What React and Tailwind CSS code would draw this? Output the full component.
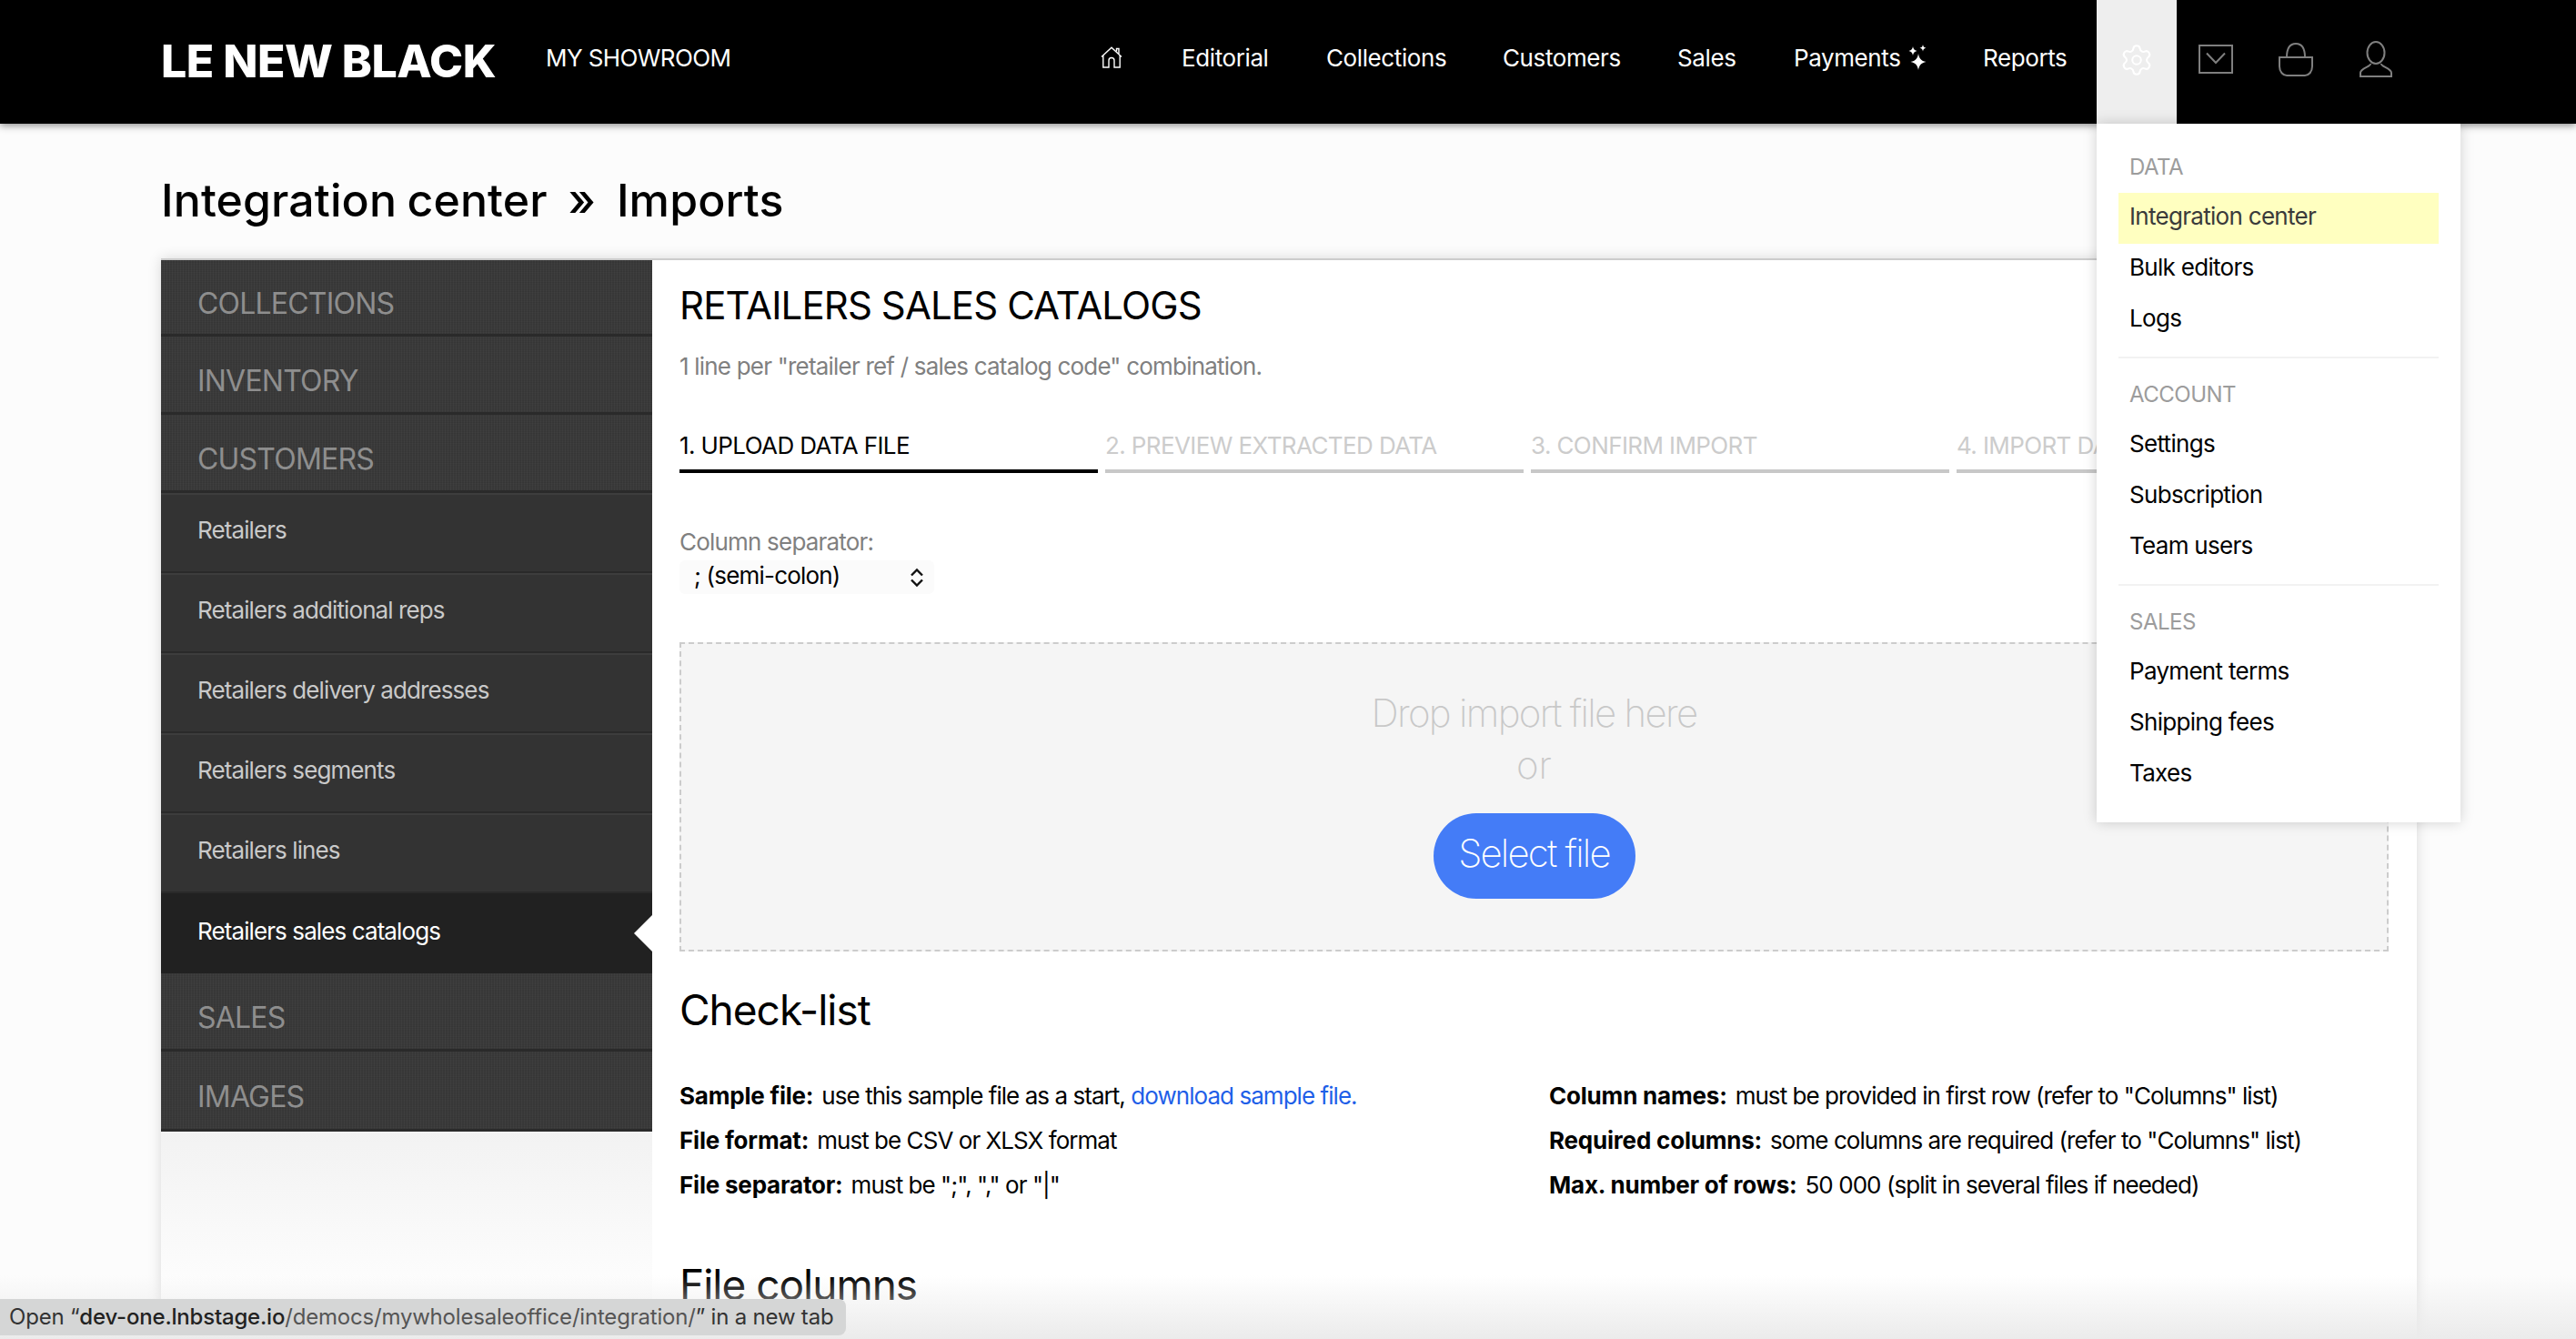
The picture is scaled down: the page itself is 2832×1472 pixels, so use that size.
import { Settings } from "lucide-react";

const font = "font-['Inter','Liberation_Sans',sans-serif]";

// fine woven noise of the sidebar headings
const sidebarTexture =
  "bg-[#3a3a3a] bg-[repeating-linear-gradient(0deg,rgba(0,0,0,0.07)_0px,rgba(0,0,0,0.07)_1px,transparent_1px,transparent_2px),repeating-linear-gradient(90deg,rgba(255,255,255,0.03)_0px,rgba(255,255,255,0.03)_1px,transparent_1px,transparent_3px)]";

function HomeIcon() {
  return (
    <svg width="24" height="24" viewBox="0 0 24 24" fill="none" stroke="#ffffff" strokeWidth="1.400" className="ml-[2px] mr-[65px] -mt-[10px]">
      <path d="M1 11.500 12 1.200l11 10.300" />
      <path d="M2.800 10v13H9v-7.500a3 3 0 0 1 6 0V23h6.200V10" />
      <path d="M17.500 5.500V2.500h2.500v5.500" />
    </svg>
  );
}

function MailIcon() {
  return (
    <svg width="38" height="32" viewBox="0 0 38 32" fill="none" stroke="#7f7f7f" strokeWidth="2">
      <rect x="1" y="1" width="36" height="30" />
      <path d="M9 9.500 19 20 29 9.500" />
    </svg>
  );
}

function BagIcon() {
  return (
    <svg width="38" height="38" viewBox="0 0 38 38" fill="none" stroke="#7f7f7f" strokeWidth="2">
      <path d="M1 17h36v10c0 6-4 10-8 10H9c-4 0-8-4-8-10z" />
      <path d="M9 17c0-10 4-15 10-15s10 5 10 15" />
    </svg>
  );
}

function UserIcon() {
  return (
    <svg width="38" height="40" viewBox="0 0 38 40" fill="none" stroke="#7f7f7f" strokeWidth="2">
      <ellipse cx="19" cy="13" rx="9.500" ry="12" />
      <path d="M13 25c1 3-11 5-11 10v4h34v-4c0-5-12-7-11-10" />
    </svg>
  );
}

function Sparkles() {
  return (
    <svg width="22" height="28" viewBox="0 0 22 28" fill="#ffffff" className="ml-[8px] -mt-[1px]">
      <path d="M11 10c.8 5 3 8 8.500 9-5.500 1-7.700 4-8.500 9-.8-5-3-8-8.500-9 5.500-1 7.700-4 8.500-9z" />
      <path d="M5 2c.4 2.800 1.500 4.300 4.500 5C6.500 7.700 5.400 9.200 5 12c-.4-2.800-1.500-4.300-4.500-5C3.500 6.300 4.600 4.800 5 2z" />
      <path d="M16 0c.3 2 1.100 3.200 3.500 3.700C17.100 4.200 16.300 5.400 16 7.500c-.3-2.100-1.100-3.300-3.500-3.800C14.900 3.200 15.700 2 16 0z" />
    </svg>
  );
}

function Header() {
  return (
    <header className="h-[136px] bg-black flex items-center pl-[177px] relative z-10 shadow-[0_2px_8px_rgba(0,0,0,0.45)]">
      <div className="text-white text-[50px] font-extrabold tracking-[-0.5px] leading-none w-[423px] whitespace-nowrap -mt-[3px]">
        LE NEW BLACK
      </div>
      <div className="text-white text-[26px] w-[608px] whitespace-nowrap -mt-[10px] tracking-[-0.6px]">MY SHOWROOM</div>
      <HomeIcon />
      <nav className="flex items-center text-white text-[26px] tracking-[-0.4px] -mt-[10px]">
        <span className="w-[159px]">Editorial</span>
        <span className="w-[194px]">Collections</span>
        <span className="w-[192px]">Customers</span>
        <span className="w-[128px]">Sales</span>
        <span className="w-[208px] flex items-center">
          Payments
          <Sparkles />
        </span>
        <span className="w-[125px]">Reports</span>
      </nav>
      <div className="w-[88px] h-[136px] bg-[#eeeeee] flex items-center justify-center pb-[4px]">
        <Settings size={38} strokeWidth={1.3} className="text-white" />
      </div>
      <div className="flex items-center gap-[50px] ml-[24px] -mt-[6px]">
        <MailIcon />
        <BagIcon />
        <UserIcon />
      </div>
    </header>
  );
}

function SectionRow({ label, height = "h-[86px]" }) {
  return (
    <div className={`${height} border-b-[3px] border-[#2a2a2a] flex items-center pl-[40px] pt-[14px] text-[#8e8e8e] text-[32px] tracking-[-0.8px] ${sidebarTexture}`}>
      {label}
    </div>
  );
}

function SubRow({ label, active }) {
  return (
    <div
      className={`h-[88px] flex items-center pl-[40px] pb-[6px] text-[26px] tracking-[-0.9px] relative ${
        active
          ? "bg-[#212121] text-white"
          : "bg-[#333333] text-[#c9c9c9] border-b-[2px] border-[#2a2a2a] shadow-[inset_0_2px_0_#3d3d3d]"
      }`}
    >
      {label}
      {active && (
        <span className="absolute right-0 top-[24px] border-y-[20px] border-y-transparent border-r-[20px] border-r-white" />
      )}
    </div>
  );
}

function Sidebar() {
  return (
    <aside className="w-[540px] shrink-0 flex flex-col">
      <SectionRow label="COLLECTIONS" height="h-[84px]" />
      <SectionRow label="INVENTORY" />
      <SectionRow label="CUSTOMERS" />
      <SubRow label="Retailers" />
      <SubRow label="Retailers additional reps" />
      <SubRow label="Retailers delivery addresses" />
      <SubRow label="Retailers segments" />
      <SubRow label="Retailers lines" />
      <SubRow label="Retailers sales catalogs" active />
      <SectionRow label="SALES" />
      <SectionRow label="IMAGES" height="h-[88px]" />
      <div className="flex-1 bg-[linear-gradient(#f2f2f2,#fdfdfd_170px)]" />
    </aside>
  );
}

function Step({ label, active }) {
  return (
    <div
      className={`w-[460px] shrink-0 h-[48px] border-b-4 text-[26px] leading-[35px] tracking-[-0.6px] whitespace-nowrap overflow-hidden ${
        active ? "border-black text-black" : "border-[#c8c8c8] text-[#cccccc]"
      }`}
    >
      {label}
    </div>
  );
}

function Fact({ label, children }) {
  return (
    <div className="h-[49px] text-[26px] tracking-[-0.95px] whitespace-nowrap text-black">
      <b className="font-bold mr-[9px] tracking-[-0.2px]">{label}</b>
      {children}
    </div>
  );
}

function Main() {
  return (
    <main className="flex-1 pl-[30px] pr-[31px] pt-[30px] bg-white">
      <h2 className="text-[42px] leading-[40px] tracking-[-0.9px] text-black">RETAILERS SALES CATALOGS</h2>
      <p className="text-[26px] leading-[32px] tracking-[-0.8px] text-[#808080] mt-[31px]">
        1 line per "retailer ref / sales catalog code" combination.
      </p>
      <div className="flex gap-[8px] mt-[53px] overflow-hidden">
        <Step label="1. UPLOAD DATA FILE" active />
        <Step label="2. PREVIEW EXTRACTED DATA" />
        <Step label="3. CONFIRM IMPORT" />
        <Step label="4. IMPORT DATA" />
      </div>
      <div className="text-[26px] leading-[32px] tracking-[-0.8px] text-[#808080] mt-[60px]">Column separator:</div>
      <div className="w-[280px] h-[37px] mt-[4px] rounded-[6px] bg-[#fbfbfb] flex items-center justify-between pl-[16px] pr-[11px] text-[26px] tracking-[-0.8px] text-black">
        <span className="-mt-[4px]">; (semi-colon)</span>
        <svg width="16" height="22" viewBox="0 0 16 22" fill="none" stroke="#111111" strokeWidth="2.400">
          <path d="M2 8.500 8 2.500l6 6M2 13.500l6 6 6-6" />
        </svg>
      </div>
      <div className="mt-[53px] h-[340px] border-2 border-dashed border-[#cccccc] bg-[#f5f5f5] flex flex-col items-center pt-[48px]">
        <div className="text-[42px] leading-[56px] font-extralight text-[#c8c8c8] tracking-[-1.7px]">Drop import file here</div>
        <div className="text-[42px] leading-[57px] font-extralight text-[#c8c8c8]">or</div>
        <button className="mt-[25px] w-[222px] h-[94px] rounded-[47px] bg-[#447cf7] text-white text-[42px] font-extralight tracking-[-1.800px] pb-[8px]">
          Select file
        </button>
      </div>
      <h3 className="text-[46px] leading-[56px] tracking-[-1px] text-black mt-[36px]">Check-list</h3>
      <div className="grid grid-cols-[956px_1fr] mt-[47px]">
        <div>
          <Fact label="Sample file:">
            use this sample file as a start, <span className="text-[#1f5fe8]">download sample file.</span>
          </Fact>
          <Fact label="File format:">must be CSV or XLSX format</Fact>
          <Fact label="File separator:">must be ";", "," or "|"</Fact>
        </div>
        <div>
          <Fact label="Column names:">must be provided in first row (refer to "Columns" list)</Fact>
          <Fact label="Required columns:">some columns are required (refer to "Columns" list)</Fact>
          <Fact label="Max. number of rows:">50 000 (split in several files if needed)</Fact>
        </div>
      </div>
      <h3 className="text-[46px] leading-[56px] tracking-[-1px] text-black mt-[52px]">File columns</h3>
    </main>
  );
}

const menuGroups = [
  { title: "DATA", items: ["Integration center", "Bulk editors", "Logs"], box: "h-[228px] border-b-2 border-[#f2f2f2]" },
  { title: "ACCOUNT", items: ["Settings", "Subscription", "Team users"], box: "h-[250px] border-b-2 border-[#f2f2f2] pt-[22px]" },
  { title: "SALES", items: ["Payment terms", "Shipping fees", "Taxes"], box: "pt-[22px]" },
];

function SettingsMenu() {
  return (
    <div className="absolute left-[2305px] top-[136px] w-[400px] h-[768px] bg-white z-20 px-[24px] pt-[30px] shadow-[0_0_14px_rgba(0,0,0,0.18)]">
      {menuGroups.map((group) => (
        <div key={group.title} className={group.box}>
          <div className="text-[24px] leading-[36px] tracking-[-0.5px] text-[#9c9c9c] pl-[12px]">{group.title}</div>
          <div className="mt-[10px]">
            {group.items.map((item) => (
              <div
                key={item}
                className={`h-[56px] pl-[12px] pb-[6px] flex items-center text-[26px] tracking-[-0.7px] ${
                  item === "Integration center" ? "bg-[#ffffc0] text-[#3a3a3a]" : "text-black"
                }`}
              >
                {item}
              </div>
            ))}
          </div>
        </div>
      ))}
    </div>
  );
}

export default function App() {
  return (
    <div className={`relative h-[1472px] w-[2832px] overflow-hidden bg-[#fcfcfc] ${font}`}>
      <Header />
      <div className="pl-[177px] pr-[175px]">
        <h1 className="h-[148px] pt-[56px] text-[50px] leading-[56px] font-medium tracking-[0.1px] [word-spacing:-2px] text-black whitespace-pre">
          {"Integration center  »  Imports"}
        </h1>
        <div className="flex h-[1200px] border-t-2 border-[#cccccc] shadow-[0_0_14px_rgba(0,0,0,0.14)]">
          <Sidebar />
          <Main />
        </div>
      </div>
      <SettingsMenu />
      {/* browser fade + link status bubble */}
      <div className="absolute left-0 right-0 bottom-0 h-[70px] z-30 bg-[linear-gradient(rgba(235,235,235,0),rgba(235,235,235,1))]" />
      <div className="absolute left-0 bottom-[4px] z-40 h-[40px] w-[930px] rounded-r-[8px] bg-[#d5d6d6] pl-[10px] flex items-center text-[24px] tracking-[-0.2px] text-[#333333] whitespace-nowrap">
        Open “<span className="font-medium text-[#222222]">dev-one.lnbstage.io</span>
        <span className="text-[#555555]">/democs/mywholesaleoffice/integration/</span>” in a new tab
      </div>
    </div>
  );
}
